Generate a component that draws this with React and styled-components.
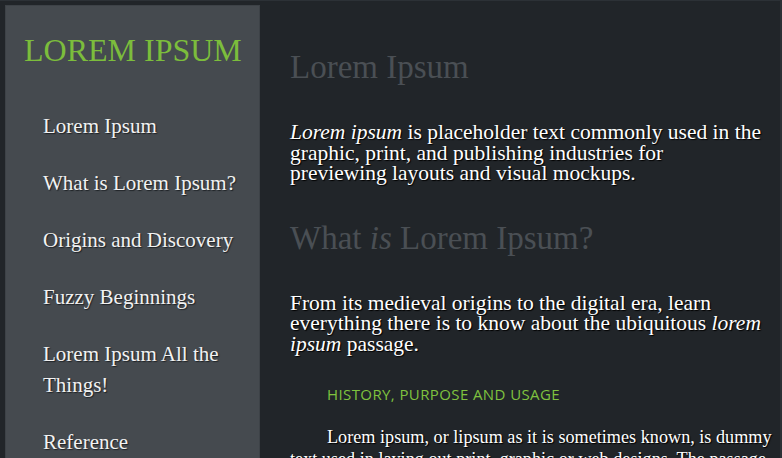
import React from 'react'
import styled, { createGlobalStyle } from 'styled-components'

const GlobalStyle = createGlobalStyle`
  html, body {
    margin: 0;
    padding: 0;
    height: 100%;
    background: #212529;
    overflow: hidden;
  }
  body {
    font-family: "Liberation Serif", "DejaVu Serif", serif;
  }
`

const Page = styled.div`
  display: flex;
  align-items: flex-start;
  height: 458px;
  overflow: hidden;
  box-sizing: border-box;
  border-top: 1px solid #2c3136;
  border-right: 2px solid #2c3136;
  padding: 4px 0 0 5px;
`

const Sidebar = styled.aside`
  flex: 0 0 255px;
  height: 460px;
  box-sizing: border-box;
  background: #454a4f;
  border: 1px solid #3d4247;
  padding: 26px 12px 0 37px;
`

const Brand = styled.h1`
  margin: 0 0 43px -19px;
  font-weight: normal;
  font-size: 32px;
  line-height: 36px;
  color: #7cbd3c;
  white-space: nowrap;
`

const Nav = styled.ul`
  list-style: none;
  margin: 0;
  padding: 0;
  display: flex;
  flex-direction: column;
  gap: 26px;
`

const NavItem = styled.li`
  font-size: 21px;
  line-height: 31px;
  color: #f2f2f2;
  text-shadow: 1px 1px 1px #1e2226;
`

const Main = styled.main`
  flex: 1;
  padding: 42px 0 0 30px;
  color: #ffffff;
`

const Heading = styled.h2`
  margin: 0 0 35px;
  font-weight: normal;
  font-size: 33px;
  line-height: 40px;
  color: #4a4f54;
`

const Lead = styled.p`
  max-width: 472px;
  margin: 0 0 34px;
  font-size: 21.5px;
  line-height: 20.5px;
  text-shadow: 1px 1px 1px #000;
`

const Kicker = styled.h3`
  margin: 0 0 26px 37px;
  font-family: "Open Sans", "Noto Sans", sans-serif;
  font-weight: normal;
  font-size: 15px;
  line-height: 12px;
  letter-spacing: 0.4px;
  color: #7fc23f;
  text-transform: uppercase;
`

const Body = styled.p`
  margin: 0;
  font-size: 18.2px;
  line-height: 22px;
  text-indent: 37px;
  text-shadow: 1px 1px 1px #000;
`

const navItems = [
  'Lorem Ipsum',
  'What is Lorem Ipsum?',
  'Origins and Discovery',
  'Fuzzy Beginnings',
  'Lorem Ipsum All the Things!',
  'Reference'
]

const App = () => (
  <>
    <GlobalStyle />
    <Page>
      <Sidebar>
        <Brand>LOREM IPSUM</Brand>
        <Nav>
          {navItems.map(item => (
            <NavItem key={item}>{item}</NavItem>
          ))}
        </Nav>
      </Sidebar>
      <Main>
        <Heading>Lorem Ipsum</Heading>
        <Lead>
          <em>Lorem ipsum</em> is placeholder text commonly used in the
          graphic, print, and publishing industries for previewing layouts
          and visual mockups.
        </Lead>
        <Heading>
          What <em>is</em> Lorem Ipsum?
        </Heading>
        <Lead>
          From its medieval origins to the digital era, learn everything there
          is to know about the ubiquitous <em>lorem ipsum</em> passage.
        </Lead>
        <Kicker>History, Purpose and Usage</Kicker>
        <Body>
          Lorem ipsum, or lipsum as it is sometimes known, is dummy text used
          in laying out print, graphic or web designs. The passage is
          attributed to an unknown typesetter in the 15th century.
        </Body>
      </Main>
    </Page>
  </>
)

export default App
